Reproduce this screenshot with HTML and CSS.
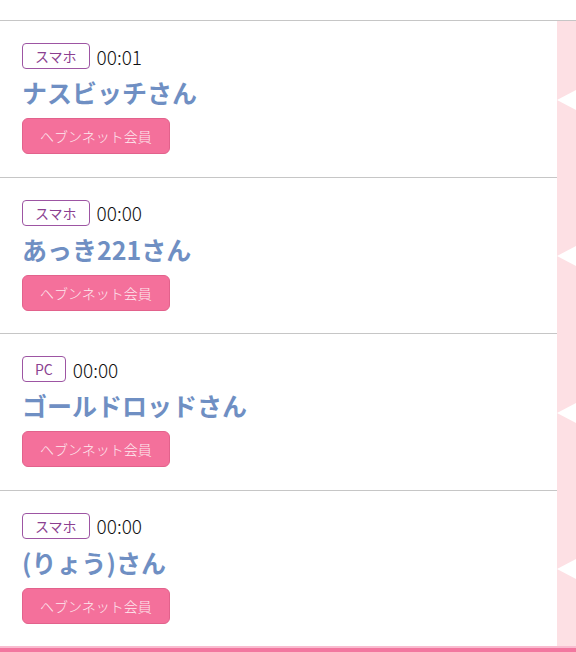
FILE: index.html
```html
<!DOCTYPE html>
<html lang="ja">
<head>
  <meta charset="UTF-8">
  <title>アクセス履歴</title>
  <link rel="stylesheet" href="styles.css">
</head>
<body>

<div class="top-space"></div>

<div class="visitor-list">
  <div class="visitor">
    <div class="visitor-body">
      <div class="visitor-meta">
        <span class="device">スマホ</span>
        <span class="time">00:01</span>
      </div>
      <div class="visitor-name">ナスビッチさん</div>
      <span class="member-badge">ヘブンネット会員</span>
    </div>
    <div class="side"><span class="arrow"></span></div>
  </div>

  <div class="visitor">
    <div class="visitor-body">
      <div class="visitor-meta">
        <span class="device">スマホ</span>
        <span class="time">00:00</span>
      </div>
      <div class="visitor-name">あっき221さん</div>
      <span class="member-badge">ヘブンネット会員</span>
    </div>
    <div class="side"><span class="arrow"></span></div>
  </div>

  <div class="visitor">
    <div class="visitor-body">
      <div class="visitor-meta">
        <span class="device">PC</span>
        <span class="time">00:00</span>
      </div>
      <div class="visitor-name">ゴールドロッドさん</div>
      <span class="member-badge">ヘブンネット会員</span>
    </div>
    <div class="side"><span class="arrow"></span></div>
  </div>

  <div class="visitor">
    <div class="visitor-body">
      <div class="visitor-meta">
        <span class="device">スマホ</span>
        <span class="time">00:00</span>
      </div>
      <div class="visitor-name">(りょう)さん</div>
      <span class="member-badge">ヘブンネット会員</span>
    </div>
    <div class="side"><span class="arrow"></span></div>
  </div>
</div>

<div class="footer-bar"></div>

</body>
</html>
```

FILE: styles.css
```css
body {
  margin: 0;
  font-family: "Noto Sans CJK JP", "Noto Sans", sans-serif;
  background: #fff;
  color: #111;
}

.top-space {
  height: 20px;
}

.visitor-list {
  border-top: 1px solid #c6c6c6;
}

.visitor {
  display: flex;
}

.visitor-body {
  flex: 1;
  padding: 22px 22px 22.5px;
}

.visitor + .visitor .visitor-body {
  border-top: 1px solid #c6c6c6;
}

.visitor-meta {
  display: flex;
  align-items: center;
  gap: 7px;
  height: 26px;
}

.device {
  display: inline-block;
  height: 24px;
  line-height: 24px;
  padding: 0 12px;
  border: 1px solid #9d55a3;
  border-radius: 4px;
  font-size: 14px;
  color: #8c3f91;
}

.time {
  font-size: 19px;
  font-weight: 300;
  color: #111;
}

.visitor-name {
  margin-top: 5px;
  height: 36px;
  line-height: 36px;
  font-size: 25px;
  font-weight: 700;
  color: #6f8fc3;
}

.member-badge {
  display: inline-block;
  margin-top: 8px;
  height: 34px;
  line-height: 34px;
  padding: 0 17px;
  background: #f4709b;
  border: 1px solid #e2628c;
  border-radius: 6px;
  font-size: 14px;
  font-weight: 300;
  color: #fde9ef;
}

.side {
  width: 19px;
  background: #fde0e4;
  display: flex;
  align-items: center;
  justify-content: flex-end;
}

.arrow {
  width: 0;
  height: 0;
  border-right: 19px solid #fff;
  border-top: 10px solid transparent;
  border-bottom: 10px solid transparent;
  margin-top: 3px;
}

.footer-bar {
  height: 6px;
  border-top: 2px solid #f9bcd0;
  background: #f2779f;
}
```
